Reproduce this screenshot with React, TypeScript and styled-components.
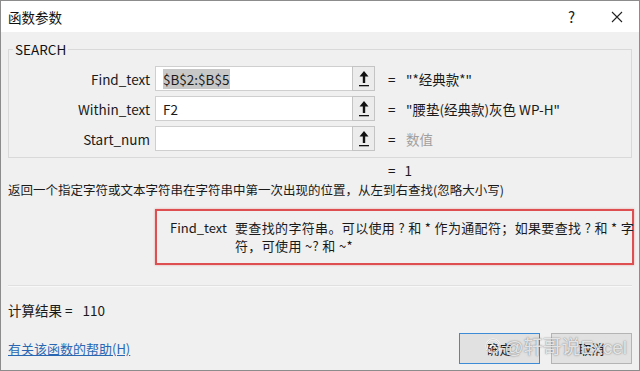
import styled, { createGlobalStyle } from "styled-components";

const GlobalStyle = createGlobalStyle`
  html, body {
    margin: 0;
    padding: 0;
    background: #f0f0f0;
  }
  body {
    font-family: "Noto Sans CJK SC", "Noto Sans", sans-serif;
  }
`;

const Dialog = styled.div`
  position: relative;
  width: 640px;
  height: 371px;
  box-sizing: border-box;
  border: 1px solid #8c8c8c;
  background: #f0f0f0;
  color: #1a1a1a;
  font-size: 13px;
  display: flex;
  flex-direction: column;
  overflow: hidden;
`;

const TitleBar = styled.div`
  height: 31px;
  flex: none;
  background: #fff;
  display: flex;
  align-items: center;
  padding-left: 7px;
  font-size: 13.5px;
  color: #111;
`;

const Title = styled.div`
  flex: 1;
`;

const TitleButton = styled.div`
  width: 45px;
  height: 31px;
  display: flex;
  align-items: center;
  justify-content: center;
  font-size: 15px;
  color: #222;
`;

const Body = styled.div`
  flex: 1;
  padding: 0 7px;
  display: flex;
  flex-direction: column;
`;

const Group = styled.fieldset`
  margin: 8px 0 0 0;
  padding: 8px 0 6px 0;
  border: 1px solid #d9d9d9;
  min-width: 0;
`;

const Legend = styled.legend`
  margin-left: 4px;
  padding: 0 2px;
  font-size: 13.5px;
  line-height: 18px;
  color: #111;
`;

const ArgGrid = styled.div`
  display: grid;
  grid-template-columns: 146px 197px 23px 31px 1fr;
  grid-auto-rows: 25px;
  row-gap: 5px;
  align-items: center;
`;

const ArgLabel = styled.div`
  text-align: right;
  padding-right: 5px;
  font-size: 13.5px;
`;

const ArgInput = styled.div`
  height: 25px;
  box-sizing: border-box;
  border: 1px solid #cfcfcf;
  border-right: none;
  background: #fff;
  display: flex;
  align-items: center;
  padding-left: 7px;
  font-size: 13.5px;
`;

const Selected = styled.span`
  background: #c8c8c8;
  padding-right: 1px;
`;

const RefButton = styled.div`
  height: 25px;
  box-sizing: border-box;
  border: 1px solid #c4c4c4;
  background: #ececec;
  display: flex;
  align-items: center;
  justify-content: center;
`;

const Equals = styled.div`
  padding-left: 13px;
  font-size: 13.5px;
`;

const ArgValue = styled.div<{ $muted?: boolean }>`
  font-size: 13.5px;
  white-space: nowrap;
  color: ${(p) => (p.$muted ? "#a0a0a0" : "#1a1a1a")};
`;

const ResultLine = styled.div`
  margin-top: 5px;
  padding-left: 380px;
  line-height: 15px;
  font-size: 13.5px;
  display: flex;
  gap: 9px;
`;

const Description = styled.div`
  margin-top: 3px;
  line-height: 18px;
  font-size: 12.5px;
  white-space: nowrap;
`;

const HelpBox = styled.div`
  margin: 10px 0 0 147px;
  width: 479px;
  box-sizing: border-box;
  border: 2px solid #de4f52;
  box-shadow: 0 0 2px rgba(220, 70, 70, 0.45);
  padding: 8px 2px 8px 13px;
  display: grid;
  grid-template-columns: 65px 1fr;
  line-height: 18px;
`;

const HelpText = styled.div`
  white-space: nowrap;
  letter-spacing: 0.35px;
`;

const Separator = styled.div`
  margin-top: 20px;
  border-top: 1px solid #e0e0e0;
  border-bottom: 1px solid #f8f8f8;
`;

const CalcResult = styled.div`
  margin-top: 14px;
  line-height: 18px;
  font-size: 13.5px;
  display: flex;
  gap: 10px;
`;

const Footer = styled.div`
  margin-top: 14px;
  display: flex;
  align-items: center;
`;

const HelpLink = styled.a`
  flex: 1;
  color: #2a67b3;
  text-decoration: underline;
  font-size: 13px;
`;

const Button = styled.div<{ $primary?: boolean }>`
  width: 81px;
  height: 31px;
  box-sizing: border-box;
  border: 1px solid ${(p) => (p.$primary ? "#3d8ad6" : "#b4b4b4")};
  background: #e1e1e1;
  display: flex;
  align-items: center;
  justify-content: center;
  font-size: 13px;
  margin-left: ${(p) => (p.$primary ? "0" : "11px")};
`;

const Watermark = styled.div`
  position: absolute;
  right: 12px;
  bottom: 11px;
  display: flex;
  align-items: center;
  gap: 3px;
  font-family: "Liberation Sans", "Noto Sans CJK SC", sans-serif;
  font-size: 19px;
  color: rgba(255, 255, 255, 0.8);
  text-shadow: 0 0 1px rgba(90, 90, 90, 0.7), 0 0 2px rgba(120, 120, 120, 0.5);
  pointer-events: none;
`;

const UpArrow = () => (
  <svg width="12" height="17" viewBox="0 0 12 17">
    <path d="M6 1 L1.5 6.5 H4.8 V13 H7.2 V6.5 H10.5 Z" fill="#111" />
    <rect x="1" y="15" width="10" height="1.3" fill="#111" />
  </svg>
);

const CloseIcon = () => (
  <svg width="12" height="12" viewBox="0 0 12 12">
    <path d="M1 1 L11 11 M11 1 L1 11" stroke="#222" strokeWidth="1.1" fill="none" />
  </svg>
);

const WatermarkLogo = () => (
  <svg width="16" height="16" viewBox="0 0 16 16">
    <circle cx="8" cy="8" r="6.5" fill="none" stroke="rgba(255,255,255,0.85)" strokeWidth="2" />
    <circle cx="8" cy="8" r="6.5" fill="none" stroke="rgba(110,110,110,0.5)" strokeWidth="0.6" />
    <path d="M5 10 Q8 4 11 10" stroke="rgba(255,255,255,0.85)" strokeWidth="1.6" fill="none" />
  </svg>
);

type Arg = { name: string; input: string; value: string; selected?: boolean; muted?: boolean };

const args: Arg[] = [
  { name: "Find_text", input: "$B$2:$B$5", value: "\"*经典款*\"", selected: true },
  { name: "Within_text", input: "F2", value: "\"腰垫(经典款)灰色 WP-H\"" },
  { name: "Start_num", input: "", value: "数值", muted: true },
];

const App = () => {
  return (
    <>
      <GlobalStyle />
      <Dialog>
        <TitleBar>
          <Title>函数参数</Title>
          <TitleButton>?</TitleButton>
          <TitleButton>
            <CloseIcon />
          </TitleButton>
        </TitleBar>
        <Body>
          <Group>
            <Legend>SEARCH</Legend>
            <ArgGrid>
              {args.map((a) => [
                <ArgLabel key={a.name + "l"}>{a.name}</ArgLabel>,
                <ArgInput key={a.name + "i"}>
                  {a.selected ? <Selected>{a.input}</Selected> : a.input}
                </ArgInput>,
                <RefButton key={a.name + "b"}>
                  <UpArrow />
                </RefButton>,
                <Equals key={a.name + "e"}>=</Equals>,
                <ArgValue key={a.name + "v"} $muted={a.muted}>
                  {a.value}
                </ArgValue>,
              ])}
            </ArgGrid>
          </Group>
          <ResultLine>
            <span>=</span>
            <span>1</span>
          </ResultLine>
          <Description>
            返回一个指定字符或文本字符串在字符串中第一次出现的位置，从左到右查找(忽略大小写)
          </Description>
          <HelpBox>
            <span>Find_text</span>
            <HelpText>
              要查找的字符串。可以使用 ? 和 * 作为通配符；如果要查找 ? 和 * 字
              <br />
              符，可使用 ~? 和 ~*
            </HelpText>
          </HelpBox>
          <Separator />
          <CalcResult>
            <span>计算结果 =</span>
            <span>110</span>
          </CalcResult>
          <Footer>
            <HelpLink>有关该函数的帮助(H)</HelpLink>
            <Button $primary>确定</Button>
            <Button>取消</Button>
          </Footer>
        </Body>
        <Watermark>
          <WatermarkLogo />
          <span>@轩哥说Excel</span>
        </Watermark>
      </Dialog>
    </>
  );
};

export default App;
